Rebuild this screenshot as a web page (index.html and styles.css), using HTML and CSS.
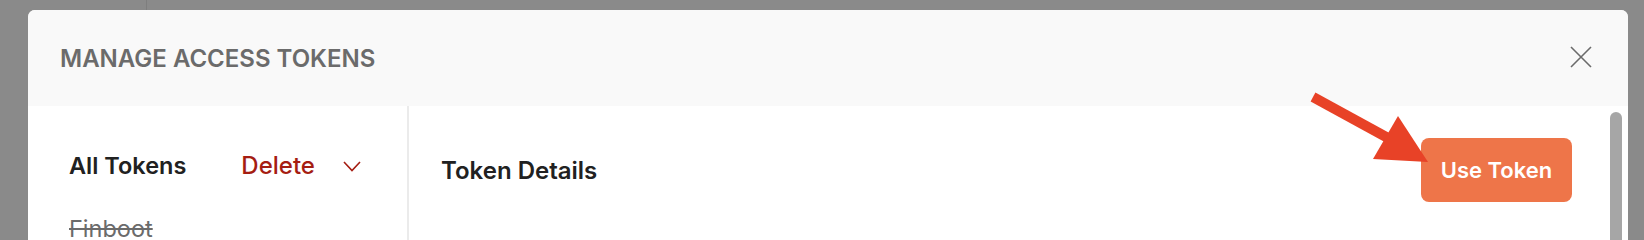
FILE: index.html
```html
<!DOCTYPE html>
<html lang="en">
<head>
  <meta charset="UTF-8" />
  <meta name="viewport" content="width=device-width, initial-scale=1.0" />
  <title>Manage Access Tokens</title>
  <link rel="stylesheet" href="styles.css">
</head>
<body>
  <!-- dimmed app behind the modal -->
  <div class="backdrop-line"></div>

  <div class="modal">
    <div class="modal-header">
      <h1>MANAGE ACCESS TOKENS</h1>
      <button class="close" aria-label="Close">
        <svg width="22" height="22" viewBox="0 0 22 22">
          <path d="M1 1 L21 21 M21 1 L1 21" stroke="#6b6b6b" stroke-width="1.6" fill="none" />
        </svg>
      </button>
    </div>

    <div class="modal-body">
      <div class="sidebar">
        <div class="sidebar-head">
          <span class="all-tokens">All Tokens</span>
          <span class="delete">Delete</span>
          <svg class="chevron" width="18" height="11" viewBox="0 0 18 11">
            <path d="M1 1 L9 9.5 L17 1" stroke="#a51d12" stroke-width="1.6" fill="none" />
          </svg>
        </div>
        <div class="token-item expired">Finboot</div>
      </div>

      <div class="details">
        <div class="details-head">
          <h2>Token Details</h2>
          <button class="use-token">Use Token</button>
        </div>
        <div class="scrollbar"></div>

        <!-- annotation arrow -->
        <svg class="arrow" width="130" height="70" viewBox="0 0 130 70">
          <path d="M2 -9 L88 38" stroke="#e84227" stroke-width="10" fill="none" />
          <polygon points="87,10 62,53 117,56" fill="#e84227" />
        </svg>
      </div>
    </div>
  </div>
</body>
</html>
```

FILE: styles.css
```css
body {
  margin: 0;
  padding: 0;
  background: #8a8a8a;
  font-family: 'Inter', 'Noto Sans', sans-serif;
  height: 240px;
  overflow: hidden;
  position: relative;
}

.backdrop-line {
  position: absolute;
  top: 0;
  left: 146px;
  width: 1px;
  height: 10px;
  background: #7e7e7e;
}

.modal {
  margin: 10px 0 0 28px;
  width: 1600px;
  background: #fff;
  border-radius: 7px 7px 0 0;
  overflow: hidden;
}

.modal-header {
  height: 96px;
  background: #f9f9f9;
  display: flex;
  align-items: center;
  justify-content: space-between;
  padding: 0 36px 0 32px;
}

.modal-header h1 {
  margin: 0;
  font-size: 24px;
  font-weight: 600;
  color: #6b6b6b;
}

.close {
  border: none;
  background: none;
  padding: 0;
  width: 22px;
  height: 22px;
  margin-top: -2px;
  cursor: pointer;
}

.close svg {
  display: block;
}

.modal-body {
  display: flex;
  height: 134px;
}

.sidebar {
  width: 381px;
  border-right: 2px solid #ebebeb;
  padding: 47px 0 0 41px;
  box-sizing: border-box;
  flex-shrink: 0;
}

.sidebar-head {
  display: flex;
  align-items: center;
  height: 24px;
}

.all-tokens {
  font-size: 23.5px;
  font-weight: 600;
  color: #212121;
}

.delete {
  margin-left: 55px;
  font-size: 24px;
  font-weight: 500;
  color: #a51d12;
}

.chevron {
  margin-left: 28px;
  margin-top: 2px;
}

.token-item {
  margin-top: 38px;
  font-size: 23.5px;
  line-height: 28px;
  color: #6b6b6b;
}

.token-item.expired {
  text-decoration: line-through;
}

.details {
  flex: 1;
  position: relative;
  padding: 32px 56px 0 32px;
}

.details-head {
  display: flex;
  align-items: center;
  justify-content: space-between;
}

.details-head h2 {
  margin: 0;
  font-size: 24px;
  font-weight: 600;
  color: #212121;
}

.use-token {
  width: 151px;
  height: 64px;
  border: none;
  border-radius: 8px;
  background: #ee7549;
  color: #fff;
  font-family: inherit;
  font-size: 22px;
  font-weight: 600;
  cursor: pointer;
}

.scrollbar {
  position: absolute;
  top: 6px;
  right: 6px;
  width: 12px;
  height: 128px;
  border-radius: 6px 6px 0 0;
  background: #a6a6a6;
}

.arrow {
  position: absolute;
  left: 902px;
  top: 0;
  overflow: visible;
}
```
